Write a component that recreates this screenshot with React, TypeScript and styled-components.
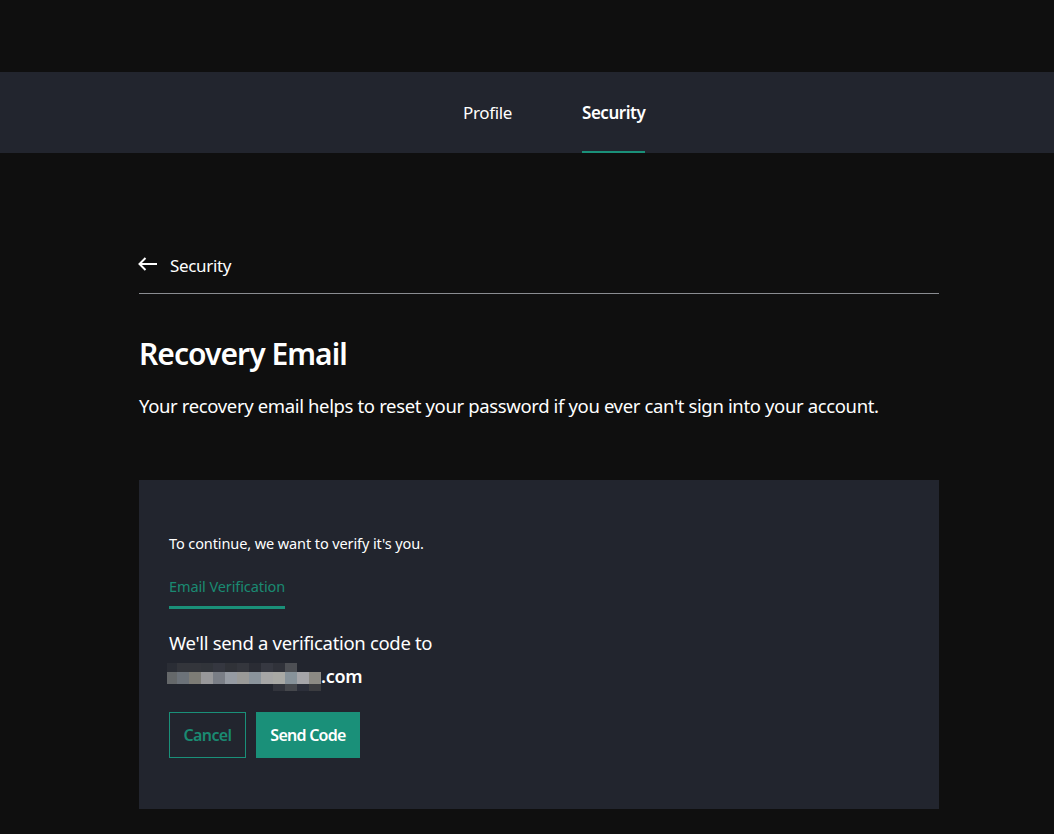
import React from "react";
import styled, { createGlobalStyle } from "styled-components";

const Global = createGlobalStyle`
  html, body { margin: 0; padding: 0; background: #0f0f0f; }
  body { font-family: "Noto Sans", "Open Sans", sans-serif; color: #fff; overflow: hidden; }
`;
const Page = styled.div`
  width: 1054px;
  height: 834px;
  padding-top: 72px;
  box-sizing: border-box;
  overflow: hidden;
`;
const TabBar = styled.nav`
  height: 81px;
  background: #22252e;
  display: flex;
  justify-content: flex-start;
  padding-left: 463px;
  gap: 70px;
  box-sizing: border-box;
`;
const Tab = styled.a<{ $active?: boolean }>`
  height: 81px;
  box-sizing: border-box;
  display: flex;
  align-items: center;
  padding-top: 2px;
  font-size: 17px;
  letter-spacing: ${(p) => (p.$active ? "-0.47px" : "-0.35px")};
  font-weight: ${(p) => (p.$active ? 600 : 400)};
  color: #fff;
  border-bottom: 2px solid ${(p) => (p.$active ? "#1a9079" : "transparent")};
`;
const Main = styled.main`
  margin: 0 0 0 139px;
  width: 800px;
  padding-top: 95px;
`;
const BackRow = styled.div`
  display: flex;
  align-items: center;
  gap: 12px;
  height: 46px;
  border-bottom: 1px solid #8a8c91;
  box-sizing: border-box;
  font-size: 17px;
  letter-spacing: -0.33px;
  padding-bottom: 11px;
`;
const BackIcon = styled.svg`
  display: block;
  margin: -2px 0 0 -1px;
  flex: none;
`;
const Title = styled.h1`
  margin: 39px 0 0;
  font-size: 30px;
  line-height: 42px;
  font-weight: 600;
  letter-spacing: -0.95px;
`;
const Lead = styled.p`
  margin: 18px 0 0;
  font-size: 18.5px;
  line-height: 26px;
  letter-spacing: -0.36px;
`;
const Card = styled.section`
  margin-top: 61px;
  height: 329px;
  background: #22252e;
  padding: 53px 30px 0;
  box-sizing: border-box;
`;
const Hint = styled.p`
  margin: 0;
  font-size: 14.5px;
  line-height: 20px;
  letter-spacing: -0.1px;
`;
const MethodTab = styled.div`
  display: inline-block;
  margin-top: 23px;
  padding-bottom: 10px;
  width: 116px;
  font-size: 14.5px;
  line-height: 20px;
  letter-spacing: -0.1px;
  white-space: nowrap;
  color: #1a8a72;
  border-bottom: 3px solid #1a9079;
`;
const Body = styled.p`
  margin: 17px 0 0;
  font-size: 18.5px;
  line-height: 33px;
  letter-spacing: -0.32px;
`;
const Address = styled.div`
  display: flex;
  align-items: center;
  height: 33px;
  margin-top: 1px;
  font-weight: 600;
  font-size: 18px;
  letter-spacing: -0.3px;
`;
const Domain = styled.span`
  margin-top: -2px;
`;
const Mosaic = styled.svg`
  display: block;
  margin-left: -2px;
  flex: none;
`;
const Actions = styled.div`
  display: flex;
  gap: 10px;
  margin-top: 19px;
`;
const Button = styled.button<{ $primary?: boolean }>`
  height: 46px;
  box-sizing: border-box;
  width: ${(p) => (p.$primary ? 104 : 77)}px;
  padding: 0;
  font-family: inherit;
  font-size: 16px;
  font-weight: 600;
  letter-spacing: ${(p) => (p.$primary ? "-0.75px" : "-0.6px")};
  color: ${(p) => (p.$primary ? "#fff" : "#1a8a72")};
  background: ${(p) => (p.$primary ? "#1a9079" : "transparent")};
  border: 1px solid #1a9079;
`;

const columnX = (i: number) => (i === 0 ? 0 : 10 + 12 * (i - 1));
const columnW = (i: number) => (i === 0 ? 10 : 12);
const top = ["#2a2d35", "#33353b", "#33353b", "#31343a", "#353740", "#303238", "#34363d", "#2a2c34", "#363841", "#30323a", "#4d4f54"];
const middle = ["#65686a", "#6c7279", "#7d7c76", "#98989a", "#7a7e86", "#969ba3", "#9a9a98", "#8b949c", "#a6a6a6", "#a9a9a5", "#87929a", "#a5a5a9", "#8c8a84"];
const bottom: [number, string][] = [[9, "#32343c"], [10, "#45474c"], [11, "#2c2f3a"], [12, "#3b3c40"]];

export default function App() {
  return (
    <Page>
      <Global />
      <TabBar>
        <Tab>Profile</Tab>
        <Tab $active>Security</Tab>
      </TabBar>
      <Main>
        <BackRow>
          <BackIcon width="20" height="14" viewBox="0 0 20 14" fill="none" stroke="#fff" strokeWidth="2">
            <path d="M19 7H1.5M7.5 1L1.5 7l6 6" />
          </BackIcon>
          <span>Security</span>
        </BackRow>
        <Title>Recovery Email</Title>
        <Lead>Your recovery email helps to reset your password if you ever can't sign into your account.</Lead>
        <Card>
          <Hint>To continue, we want to verify it's you.</Hint>
          <MethodTab>Email Verification</MethodTab>
          <Body>We'll send a verification code to</Body>
          <Address>
            <Mosaic width="154" height="28" viewBox="0 0 154 28">
              {top.map((c, i) => (
                <rect key={`t${i}`} x={columnX(i)} y={0} width={columnW(i)} height={9} fill={c} />
              ))}
              {middle.map((c, i) => (
                <rect key={`m${i}`} x={columnX(i)} y={9} width={columnW(i)} height={12} fill={c} />
              ))}
              {bottom.map(([i, c]) => (
                <rect key={`b${i}`} x={columnX(i)} y={21} width={12} height={7} fill={c} />
              ))}
            </Mosaic>
            <Domain>.com</Domain>
          </Address>
          <Actions>
            <Button>Cancel</Button>
            <Button $primary>Send Code</Button>
          </Actions>
        </Card>
      </Main>
    </Page>
  );
}
